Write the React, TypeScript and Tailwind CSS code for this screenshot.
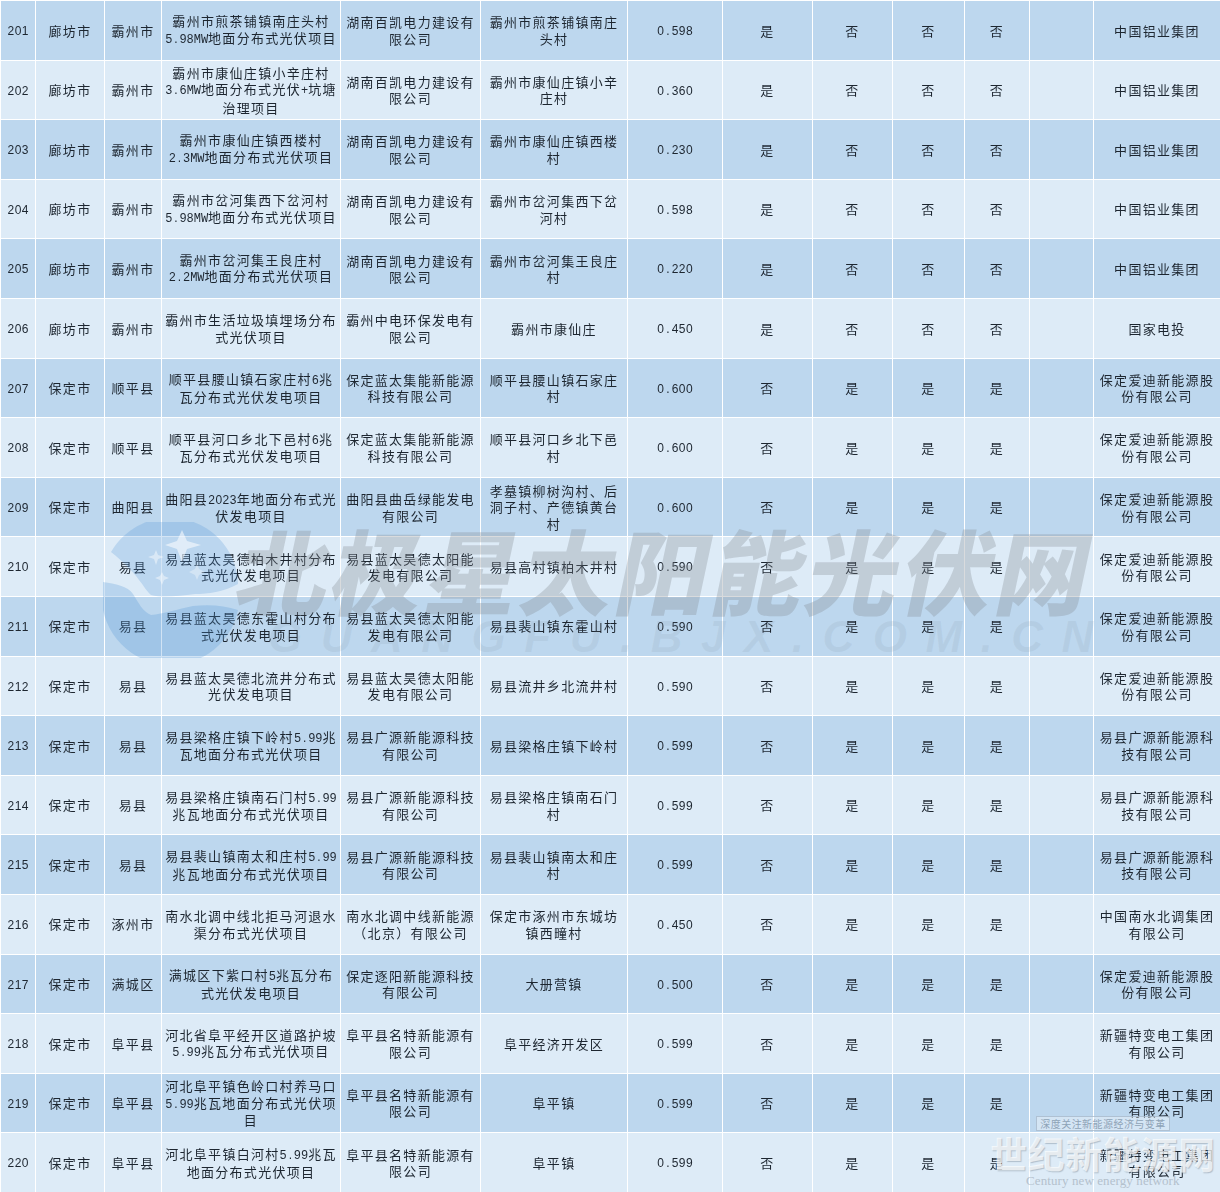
import React from 'react';

interface Row {
    id: number;
    city: string;
    county: string;
    project: string;
    owner: string;
    site: string;
    size: string;
    flags: [string, string, string, string];
    group: string;
}

const NO_YES: [string, string, string, string] = ['否', '是', '是', '是'];
const YES_NO: [string, string, string, string] = ['是', '否', '否', '否'];
const HUNAN = '湖南百凯电力建设有\n限公司';
const ZHONGLV = '中国铝业集团';
const AIDI = '保定爱迪新能源股\n份有限公司';
const LANTAI = '保定蓝太集能新能源\n科技有限公司';
const HAODE = '易县蓝太昊德太阳能\n发电有限公司';
const GUANGYUAN = '易县广源新能源科技\n有限公司';
const GUANGYUAN_GROUP = '易县广源新能源科\n技有限公司';
const MINGTE = '阜平县名特新能源有\n限公司';
const TEBIAN = '新疆特变电工集团\n有限公司';

const rows: Row[] = [
    { id: 201, city: '廊坊市', county: '霸州市', project: '霸州市煎茶铺镇南庄头村\n5.98MW地面分布式光伏项目', owner: HUNAN, site: '霸州市煎茶铺镇南庄\n头村', size: '0.598', flags: YES_NO, group: ZHONGLV },
    { id: 202, city: '廊坊市', county: '霸州市', project: '霸州市康仙庄镇小辛庄村\n3.6MW地面分布式光伏+坑塘\n治理项目', owner: HUNAN, site: '霸州市康仙庄镇小辛\n庄村', size: '0.360', flags: YES_NO, group: ZHONGLV },
    { id: 203, city: '廊坊市', county: '霸州市', project: '霸州市康仙庄镇西楼村\n2.3MW地面分布式光伏项目', owner: HUNAN, site: '霸州市康仙庄镇西楼\n村', size: '0.230', flags: YES_NO, group: ZHONGLV },
    { id: 204, city: '廊坊市', county: '霸州市', project: '霸州市岔河集西下岔河村\n5.98MW地面分布式光伏项目', owner: HUNAN, site: '霸州市岔河集西下岔\n河村', size: '0.598', flags: YES_NO, group: ZHONGLV },
    { id: 205, city: '廊坊市', county: '霸州市', project: '霸州市岔河集王良庄村\n2.2MW地面分布式光伏项目', owner: HUNAN, site: '霸州市岔河集王良庄\n村', size: '0.220', flags: YES_NO, group: ZHONGLV },
    { id: 206, city: '廊坊市', county: '霸州市', project: '霸州市生活垃圾填埋场分布\n式光伏项目', owner: '霸州中电环保发电有\n限公司', site: '霸州市康仙庄', size: '0.450', flags: YES_NO, group: '国家电投' },
    { id: 207, city: '保定市', county: '顺平县', project: '顺平县腰山镇石家庄村6兆\n瓦分布式光伏发电项目', owner: LANTAI, site: '顺平县腰山镇石家庄\n村', size: '0.600', flags: NO_YES, group: AIDI },
    { id: 208, city: '保定市', county: '顺平县', project: '顺平县河口乡北下邑村6兆\n瓦分布式光伏发电项目', owner: LANTAI, site: '顺平县河口乡北下邑\n村', size: '0.600', flags: NO_YES, group: AIDI },
    { id: 209, city: '保定市', county: '曲阳县', project: '曲阳县2023年地面分布式光\n伏发电项目', owner: '曲阳县曲岳绿能发电\n有限公司', site: '孝墓镇柳树沟村、后\n洞子村、产德镇黄台\n村', size: '0.600', flags: NO_YES, group: AIDI },
    { id: 210, city: '保定市', county: '易县', project: '易县蓝太昊德柏木井村分布\n式光伏发电项目', owner: HAODE, site: '易县高村镇柏木井村', size: '0.590', flags: NO_YES, group: AIDI },
    { id: 211, city: '保定市', county: '易县', project: '易县蓝太昊德东霍山村分布\n式光伏发电项目', owner: HAODE, site: '易县裴山镇东霍山村', size: '0.590', flags: NO_YES, group: AIDI },
    { id: 212, city: '保定市', county: '易县', project: '易县蓝太昊德北流井分布式\n光伏发电项目', owner: HAODE, site: '易县流井乡北流井村', size: '0.590', flags: NO_YES, group: AIDI },
    { id: 213, city: '保定市', county: '易县', project: '易县梁格庄镇下岭村5.99兆\n瓦地面分布式光伏项目', owner: GUANGYUAN, site: '易县梁格庄镇下岭村', size: '0.599', flags: NO_YES, group: GUANGYUAN_GROUP },
    { id: 214, city: '保定市', county: '易县', project: '易县梁格庄镇南石门村5.99\n兆瓦地面分布式光伏项目', owner: GUANGYUAN, site: '易县梁格庄镇南石门\n村', size: '0.599', flags: NO_YES, group: GUANGYUAN_GROUP },
    { id: 215, city: '保定市', county: '易县', project: '易县裴山镇南太和庄村5.99\n兆瓦地面分布式光伏项目', owner: GUANGYUAN, site: '易县裴山镇南太和庄\n村', size: '0.599', flags: NO_YES, group: GUANGYUAN_GROUP },
    { id: 216, city: '保定市', county: '涿州市', project: '南水北调中线北拒马河退水\n渠分布式光伏项目', owner: '南水北调中线新能源\n（北京）有限公司', site: '保定市涿州市东城坊\n镇西疃村', size: '0.450', flags: NO_YES, group: '中国南水北调集团\n有限公司' },
    { id: 217, city: '保定市', county: '满城区', project: '满城区下紫口村5兆瓦分布\n式光伏发电项目', owner: '保定逐阳新能源科技\n有限公司', site: '大册营镇', size: '0.500', flags: NO_YES, group: AIDI },
    { id: 218, city: '保定市', county: '阜平县', project: '河北省阜平经开区道路护坡\n5.99兆瓦分布式光伏项目', owner: MINGTE, site: '阜平经济开发区', size: '0.599', flags: NO_YES, group: TEBIAN },
    { id: 219, city: '保定市', county: '阜平县', project: '河北阜平镇色岭口村养马口\n5.99兆瓦地面分布式光伏项\n目', owner: MINGTE, site: '阜平镇', size: '0.599', flags: NO_YES, group: TEBIAN },
    { id: 220, city: '保定市', county: '阜平县', project: '河北阜平镇白河村5.99兆瓦\n地面分布式光伏项目', owner: MINGTE, site: '阜平镇', size: '0.599', flags: NO_YES, group: TEBIAN },
];

// half-width characters sit in fixed cells, as in the sheet's font
function Line({ text }: { text: string }) {
    return (
        <div className="whitespace-nowrap">
            {text.split(/([0-9.A-Za-z+])/).map((part, i) => {
                if (/^[0-9.]$/.test(part)) {
                    return (
                        <span key={i} className="inline-block w-[7.15px] text-center font-['Liberation_Sans',sans-serif] text-[12px] tracking-normal">
                            {part}
                        </span>
                    );
                }
                if (/^[A-Za-z+]$/.test(part)) {
                    return (
                        <span key={i} className="inline-block w-[7.15px] text-center font-['Liberation_Mono',monospace] text-[12px] tracking-normal">
                            {part}
                        </span>
                    );
                }
                return part;
            })}
        </div>
    );
}

function Cell({ text = '' }: { text?: string }) {
    return (
        <td className="border border-white p-0 text-center align-middle">
            <div className="flex flex-col items-center pt-px">
                {text.split('\n').map((l, i) => (
                    <Line key={i} text={l} />
                ))}
            </div>
        </td>
    );
}

function SourceMark() {
    return (
        <div className="pointer-events-none absolute left-[103px] top-[522px] flex items-start">
            <svg width="136" height="136" viewBox="0 0 136 136" className="shrink-0">
                <path d="M8 30 A68 68 0 0 1 135 62 C120 70 105 72 92 72 C75 74 60 76 48 73 C40 66 36 52 8 30 Z" fill="#4f92d6" fillOpacity="0.24" />
                <path d="M0 60 C12 62 25 64 30 72 C35 80 40 90 48 93 C60 92 75 87 90 84 C108 82 122 84 135 88 A68 68 0 0 1 0 60 Z" fill="#4f92d6" fillOpacity="0.26" />
                <path d="M79 8 L84 19 L98 23 L84 27 L79 40 L74 27 L62 23 L74 19 Z" fill="#ffffff" fillOpacity="0.55" />
                <path d="M53 28 L55 33 L61 35 L55 37 L53 43 L51 37 L45 35 L51 33 Z" fill="#ffffff" fillOpacity="0.45" />
                <path d="M59 50 L61 54 L66 56 L61 58 L59 63 L57 58 L52 56 L57 54 Z" fill="#ffffff" fillOpacity="0.45" />
                <path d="M94 42 L96 47 L102 50 L96 53 L94 58 L92 53 L86 50 L92 47 Z" fill="#ffffff" fillOpacity="0.35" />
            </svg>
        </div>
    );
}

export default function App() {
    return (
        <div className="relative h-[1192px] w-[1220px] overflow-hidden bg-white font-['Noto_Sans_CJK_SC',sans-serif] text-[13px] leading-[16.5px] tracking-[1.3px] text-[#1d2630]">
            <table className="h-[1192px] w-[1220px] table-fixed border-collapse blur-[0.45px]">
                <colgroup>
                    <col className="w-[35px]" />
                    <col className="w-[69px]" />
                    <col className="w-[57px]" />
                    <col className="w-[179px]" />
                    <col className="w-[140px]" />
                    <col className="w-[147px]" />
                    <col className="w-[95px]" />
                    <col className="w-[90px]" />
                    <col className="w-[80px]" />
                    <col className="w-[72px]" />
                    <col className="w-[65px]" />
                    <col className="w-[64px]" />
                    <col className="w-[127px]" />
                </colgroup>
                <tbody>
                    {rows.map((r) => (
                        <tr key={r.id} className={r.id % 2 === 1 ? 'h-[59.6px] bg-[#bdd7ee]' : 'h-[59.6px] bg-[#ddebf7]'}>
                            <Cell text={String(r.id)} />
                            <Cell text={r.city} />
                            <Cell text={r.county} />
                            <Cell text={r.project} />
                            <Cell text={r.owner} />
                            <Cell text={r.site} />
                            <Cell text={r.size} />
                            {r.flags.map((f, i) => (
                                <Cell key={i} text={f} />
                            ))}
                            <Cell />
                            <Cell text={r.group} />
                        </tr>
                    ))}
                </tbody>
            </table>

            {/* 北极星 watermark */}
            <SourceMark />
            <div className="pointer-events-none absolute left-[240px] top-[522px] flex -skew-x-12 font-black text-[#82878f]/30 text-[92px] leading-[92px] tracking-normal">
                {Array.from('北极星太阳能光伏网').map((c, i) => (
                    <span key={i} className="w-[95px]">{c}</span>
                ))}
            </div>
            <div className="pointer-events-none absolute left-[268px] top-[612px] whitespace-nowrap font-['Liberation_Sans',sans-serif] text-[44px] font-bold italic leading-[50px] tracking-[18.5px] text-[#76879a]/12">
                GUANGFU.BJX.COM.CN
            </div>

            {/* 世纪新能源网 watermark */}
            <div className="pointer-events-none absolute left-[1036px] top-[1116px] h-[15px] w-[134px] border border-[#9fb2c4]/70 bg-white/35 text-center text-[10px] leading-[13px] tracking-[0.45px] text-[#8ea3b7]">
                深度关注新能源经济与变革
            </div>
            <div className="pointer-events-none absolute left-[990px] top-[1130px] whitespace-nowrap text-[37px] font-bold leading-[46px] tracking-[0.6px] text-white/70 [text-shadow:1px_1px_1px_rgba(110,125,140,0.4)]">
                世纪新能源网
            </div>
            <div className="pointer-events-none absolute left-[1026px] top-[1173px] whitespace-nowrap font-['Liberation_Serif',serif] text-[13px] leading-[16px] tracking-[0.1px] text-[#b4c1cd]">
                Century new energy network
            </div>
        </div>
    );
}
